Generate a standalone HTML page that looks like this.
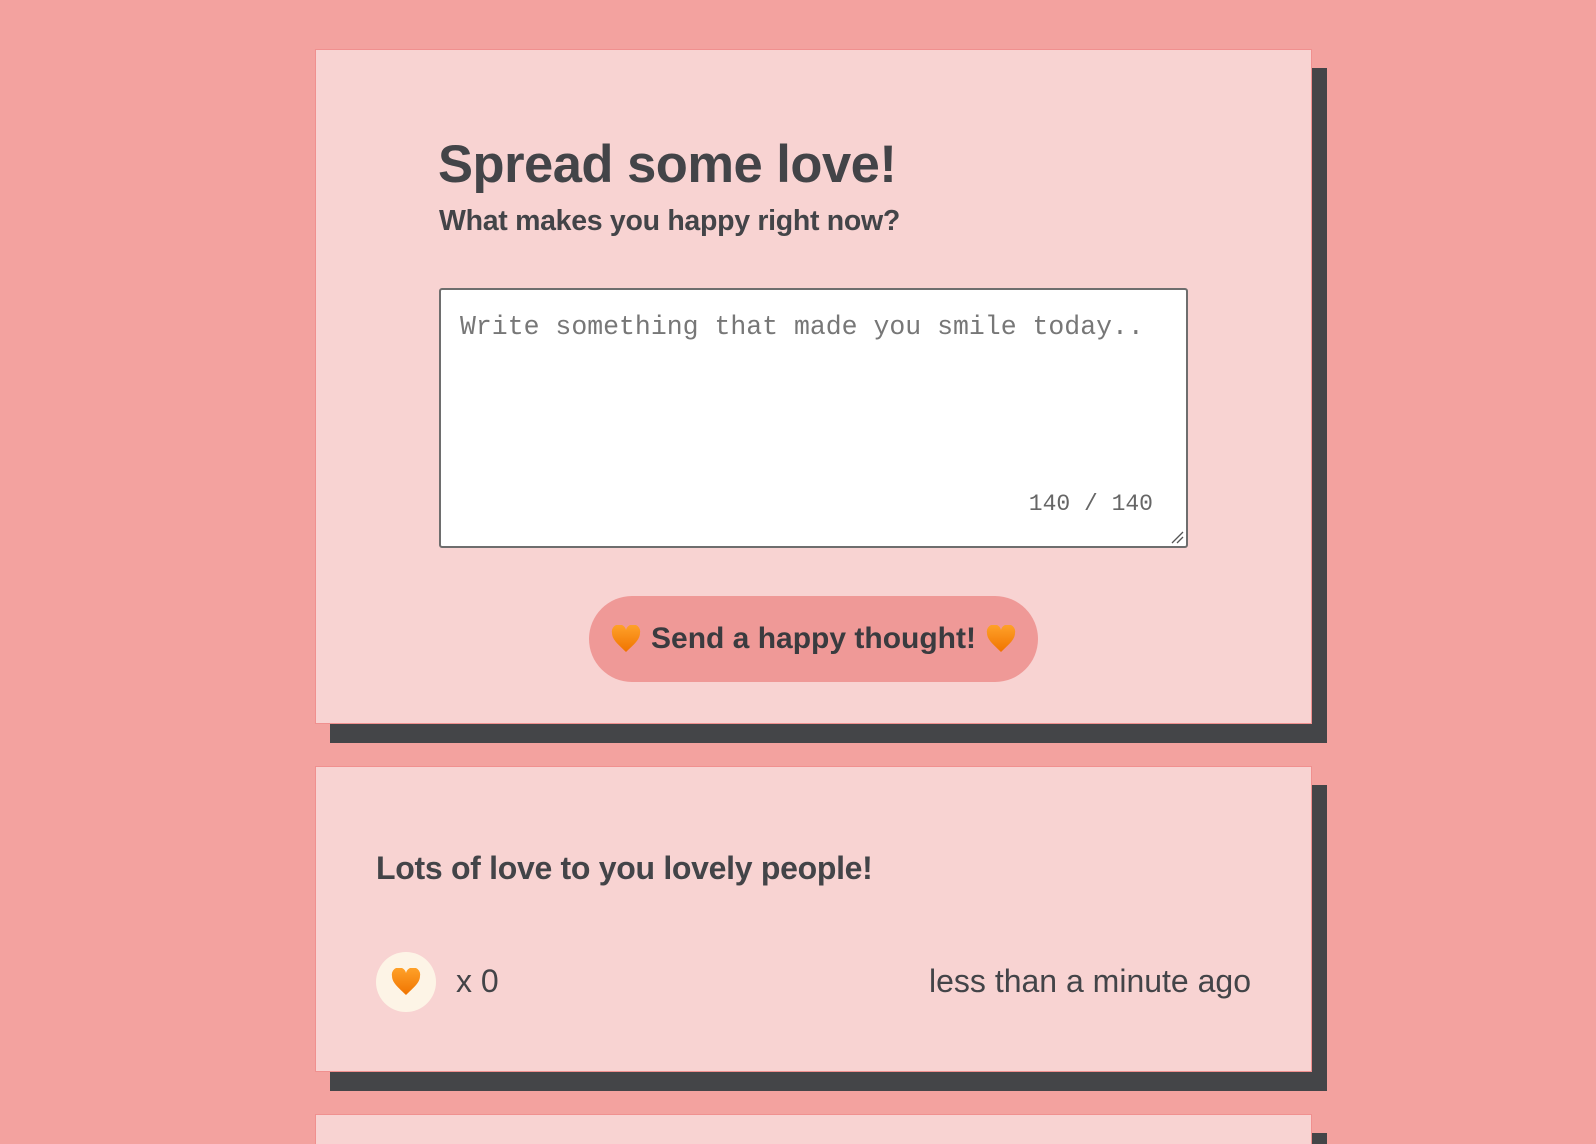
<!DOCTYPE html>
<html><head><meta charset="utf-8"><style>
*{box-sizing:border-box;margin:0;padding:0}
html,body{width:1596px;height:1144px;overflow:hidden;background:#f3a29f;font-family:"Liberation Sans",sans-serif;color:#434448;position:relative}
.card{position:absolute;left:315px;width:997px;background:#f8d3d2;border:1px solid #f0908f;box-shadow:15px 19px 0 #444548}
h1{position:absolute;left:122px;top:84px;font-size:52.5px;font-weight:bold;letter-spacing:-0.5px}
h2{position:absolute;left:123px;top:155px;font-size:28.5px;font-weight:bold;letter-spacing:-0.3px}
.ta{position:absolute;left:123px;top:238px;width:749px;height:260px;background:#fff;border:2px solid #6e6e6e;border-radius:3px}
.ph{position:absolute;left:19px;top:22px;font-family:"Liberation Mono",monospace;font-size:26.5px;color:#777}
.cnt{position:absolute;right:33px;top:201px;font-family:"Liberation Mono",monospace;font-size:23px;color:#666}
.rs{position:absolute;right:2px;bottom:2px}
.btn{position:absolute;left:273px;top:546px;width:449px;height:86px;border-radius:43px;background:#ef9997;display:flex;align-items:center;justify-content:center;gap:10px;font-weight:bold;font-size:30px;color:#3a3b3f}
.t2{position:absolute;left:60px;top:83px;font-size:32px;font-weight:bold;letter-spacing:-0.3px}
.hc{position:absolute;left:60px;top:185px;width:60px;height:60px;border-radius:50%;background:#fdf4e6;display:flex;align-items:center;justify-content:center}
.x0{position:absolute;left:140px;top:196px;font-size:32px}
.ago{position:absolute;right:60px;top:196px;font-size:32px}
</style></head><body>
<div class="card" style="top:49px;height:675px">
<h1>Spread some love!</h1>
<h2>What makes you happy right now?</h2>
<div class="ta"><div class="ph">Write something that made you smile today..</div><div class="cnt">140 / 140</div>
<svg class="rs" width="14" height="14"><path d="M2 13L13 2M7 13L13 7" stroke="#555" stroke-width="1.3"/></svg></div>
<div class="btn"><svg width="30" height="28" viewBox="0 0 30 28"><defs><linearGradient id="g" x1="0" y1="0" x2="0" y2="1"><stop offset="0" stop-color="#ffa22a"/><stop offset="1" stop-color="#f07400"/></linearGradient></defs><path d="M15 27C8 20 1 15 1 8A7 7 0 0 1 15 5A7 7 0 0 1 29 8C29 15 22 20 15 27Z" fill="url(#g)"/></svg><span>Send a happy thought!</span><svg width="30" height="28" viewBox="0 0 30 28"><path d="M15 27C8 20 1 15 1 8A7 7 0 0 1 15 5A7 7 0 0 1 29 8C29 15 22 20 15 27Z" fill="url(#g)"/></svg></div>
</div>
<div class="card" style="top:766px;height:306px">
<div class="t2">Lots of love to you lovely people!</div>
<div class="hc"><svg width="30" height="28" viewBox="0 0 30 28"><path d="M15 27C8 20 1 15 1 8A7 7 0 0 1 15 5A7 7 0 0 1 29 8C29 15 22 20 15 27Z" fill="url(#g)"/></svg></div>
<div class="x0">x 0</div>
<div class="ago">less than a minute ago</div>
</div>
<div class="card" style="top:1114px;height:30px;border-bottom:none"></div>
</body></html>
